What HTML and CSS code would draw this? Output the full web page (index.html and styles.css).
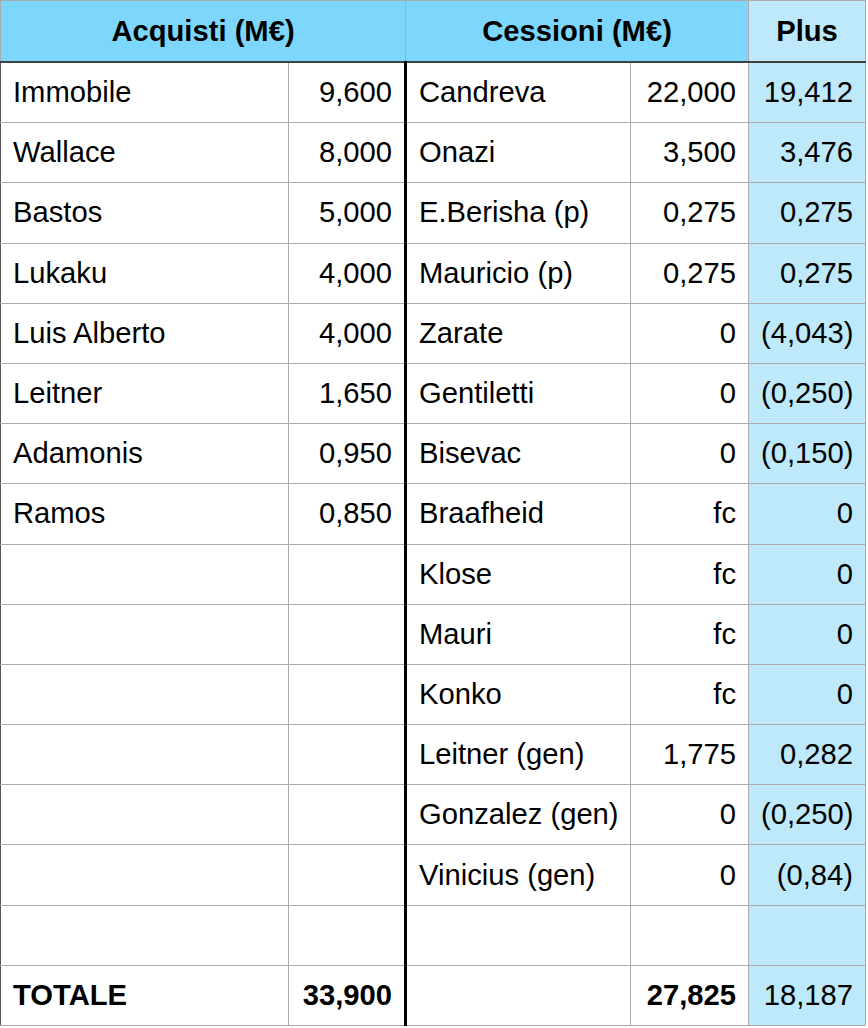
FILE: index.html
```html
<!DOCTYPE html>
<html lang="it">
<head>
<meta charset="utf-8">
<title>Mercato</title>
<link rel="stylesheet" href="styles.css">
</head>
<body>
<table class="sheet">
  <colgroup>
    <col class="c-name"><col class="c-val"><col class="c-name2"><col class="c-val2"><col class="c-plus">
  </colgroup>
  <thead>
    <tr>
      <th colspan="2" class="hd">Acquisti (M€)</th>
      <th colspan="2" class="hd sep">Cessioni (M€)</th>
      <th class="hd plus-h">Plus</th>
    </tr>
  </thead>
  <tbody>
    <tr><td>Immobile</td><td class="num">9,600</td><td class="sep">Candreva</td><td class="num">22,000</td><td class="num plus">19,412</td></tr>
    <tr><td>Wallace</td><td class="num">8,000</td><td class="sep">Onazi</td><td class="num">3,500</td><td class="num plus">3,476</td></tr>
    <tr><td>Bastos</td><td class="num">5,000</td><td class="sep">E.Berisha (p)</td><td class="num">0,275</td><td class="num plus">0,275</td></tr>
    <tr><td>Lukaku</td><td class="num">4,000</td><td class="sep">Mauricio (p)</td><td class="num">0,275</td><td class="num plus">0,275</td></tr>
    <tr><td>Luis Alberto</td><td class="num">4,000</td><td class="sep">Zarate</td><td class="num">0</td><td class="num plus">(4,043)</td></tr>
    <tr><td>Leitner</td><td class="num">1,650</td><td class="sep">Gentiletti</td><td class="num">0</td><td class="num plus">(0,250)</td></tr>
    <tr><td>Adamonis</td><td class="num">0,950</td><td class="sep">Bisevac</td><td class="num">0</td><td class="num plus">(0,150)</td></tr>
    <tr><td>Ramos</td><td class="num">0,850</td><td class="sep">Braafheid</td><td class="num">fc</td><td class="num plus">0</td></tr>
    <tr><td></td><td class="num"></td><td class="sep">Klose</td><td class="num">fc</td><td class="num plus">0</td></tr>
    <tr><td></td><td class="num"></td><td class="sep">Mauri</td><td class="num">fc</td><td class="num plus">0</td></tr>
    <tr><td></td><td class="num"></td><td class="sep">Konko</td><td class="num">fc</td><td class="num plus">0</td></tr>
    <tr><td></td><td class="num"></td><td class="sep">Leitner (gen)</td><td class="num">1,775</td><td class="num plus">0,282</td></tr>
    <tr><td></td><td class="num"></td><td class="sep">Gonzalez (gen)</td><td class="num">0</td><td class="num plus">(0,250)</td></tr>
    <tr><td></td><td class="num"></td><td class="sep">Vinicius (gen)</td><td class="num">0</td><td class="num plus">(0,84)</td></tr>
    <tr><td></td><td class="num"></td><td class="sep"></td><td class="num"></td><td class="num plus"></td></tr>
    <tr class="total"><td class="b">TOTALE</td><td class="num b">33,900</td><td class="sep"></td><td class="num b">27,825</td><td class="num plus">18,187</td></tr>
  </tbody>
</table>
</body>
</html>
```

FILE: styles.css
```css
html, body {
  margin: 0;
  padding: 0;
  background: #ffffff;
}

.sheet {
  border-collapse: collapse;
  table-layout: fixed;
  width: 865px;
  font-family: "Liberation Sans", Arial, sans-serif;
  font-size: 29.2px;
  color: #000;
  border-left: 1px solid #555;
  border-top: 1px solid #a8a8a8;
}

.c-name { width: 288px; }
.c-val { width: 117px; }
.c-name2 { width: 225px; }
.c-val2 { width: 118px; }
.c-plus { width: 117px; }

.sheet th,
.sheet td {
  border: 1px solid #ababab;
  padding: 0 12px;
  height: 59.2px;
  white-space: nowrap;
  overflow: hidden;
}

.sheet td:first-child {
  border-left: 1px solid #555;
}

.hd {
  background: #7dd6fc;
  font-weight: bold;
  text-align: center;
  border-bottom: 2px solid #404040 !important;
}

.sheet th.hd {
  height: 60px;
}

.plus-h {
  background: #bde9fb;
}

.sheet td {
  text-align: left;
}

.sheet td.num {
  text-align: right;
}

.sheet td.sep {
  border-left: 3px solid #000;
}

.sheet th.sep {
  border-left: 1px solid #ababab;
}

.plus {
  background: #bee9fb;
}

.b {
  font-weight: bold;
}
```
